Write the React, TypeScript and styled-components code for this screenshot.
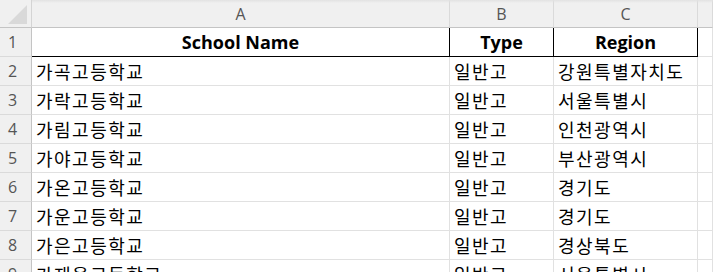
import React from 'react';
import styled, { createGlobalStyle } from 'styled-components';

const GlobalStyle = createGlobalStyle`
  html, body {
    margin: 0;
    padding: 0;
    background: #fff;
    overflow: hidden;
  }
`;

const latin = `'Open Sans', 'Noto Sans', 'Noto Sans CJK KR', sans-serif`;
const korean = `'Noto Sans CJK KR', 'Noto Sans', sans-serif`;

const Sheet = styled.div`
  position: relative;
  display: grid;
  grid-template-columns: 32px 418px 104px 144px 1fr;
  grid-auto-rows: 29px;
  grid-template-rows: 28px;
  width: 713px;
  height: 272px;
  overflow: hidden;
  background: #fff;

  &::before {
    content: '';
    position: absolute;
    left: 0;
    right: 0;
    top: 0;
    height: 3px;
    background: linear-gradient(#e2e2e2, rgba(240, 240, 240, 0));
    pointer-events: none;
  }
`;

const Corner = styled.div`
  position: relative;
  background: #f0f0f0;
  border-right: 1px solid #d4d4d4;
  border-bottom: 1px solid #c4c4c4;

  &::after {
    content: '';
    position: absolute;
    right: 4px;
    bottom: 3px;
    width: 0;
    height: 0;
    border-left: 19px solid transparent;
    border-bottom: 19px solid #d9d9d9;
  }
`;

const ColHead = styled.div`
  display: flex;
  align-items: center;
  justify-content: center;
  background: #f0f0f0;
  border-right: 1px solid #dadada;
  border-bottom: 1px solid #c4c4c4;
  font-family: ${latin};
  font-size: 16px;
  color: #555;
  padding-top: 1px;
`;

const RowHead = styled.div`
  display: flex;
  align-items: center;
  justify-content: center;
  padding-right: 6px;
  background: #f0f0f0;
  border-right: 1px solid #c4c4c4;
  border-bottom: 1px solid #dadada;
  font-family: ${latin};
  font-size: 16px;
  color: #555;
`;

// $title: bold header row with black borders
const Cell = styled.div<{ $title?: boolean }>`
  display: flex;
  align-items: center;
  justify-content: ${({ $title }) => ($title ? 'center' : 'flex-start')};
  padding-left: ${({ $title }) => ($title ? '0' : '4px')};
  white-space: nowrap;
  border-right: 1px solid ${({ $title }) => ($title ? '#000' : '#e1e1e1')};
  border-bottom: 1px solid ${({ $title }) => ($title ? '#000' : '#e1e1e1')};
  font-family: ${({ $title }) => ($title ? latin : korean)};
  font-weight: ${({ $title }) => ($title ? 700 : 400)};
  font-size: 18px;
  letter-spacing: ${({ $title }) => ($title ? '0' : '1.5px')};
  color: #000;
`;

const columns = ['A', 'B', 'C', ''];

const rows: [string, string, string][] = [
  ['가곡고등학교', '일반고', '강원특별자치도'],
  ['가락고등학교', '일반고', '서울특별시'],
  ['가림고등학교', '일반고', '인천광역시'],
  ['가야고등학교', '일반고', '부산광역시'],
  ['가온고등학교', '일반고', '경기도'],
  ['가운고등학교', '일반고', '경기도'],
  ['가은고등학교', '일반고', '경상북도'],
  ['가재울고등학교', '일반고', '서울특별시']
];

const App: React.FC = () => (
  <>
    <GlobalStyle />
    <Sheet>
      <Corner />
      {columns.map((c, i) => (
        <ColHead key={i}>{c}</ColHead>
      ))}

      <RowHead>1</RowHead>
      <Cell $title>School Name</Cell>
      <Cell $title>Type</Cell>
      <Cell $title>Region</Cell>
      <Cell />

      {rows.map((r, i) => (
        <React.Fragment key={r[0]}>
          <RowHead>{i + 2}</RowHead>
          <Cell>{r[0]}</Cell>
          <Cell>{r[1]}</Cell>
          <Cell>{r[2]}</Cell>
          <Cell />
        </React.Fragment>
      ))}
    </Sheet>
  </>
);

export default App;
